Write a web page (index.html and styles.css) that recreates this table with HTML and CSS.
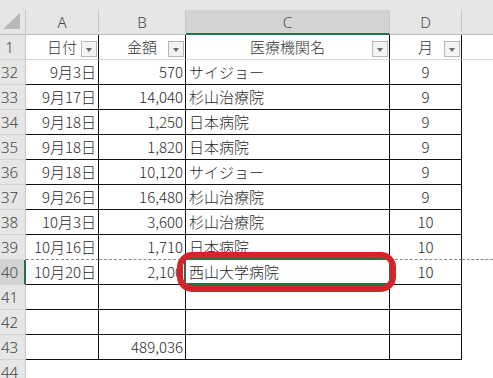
FILE: index.html
```html
<!DOCTYPE html>
<html lang="ja">
<head>
<meta charset="utf-8">
<title>Sheet</title>
<link rel="stylesheet" href="styles.css">
</head>
<body>
<div class="sheet">
  <div class="strip"></div>

  <div class="corner"><svg width="18" height="17" viewBox="0 0 18 17"><polygon points="17,0 17,16 0,16" fill="#b9b9b9"/></svg></div>
  <div class="colhead">A</div>
  <div class="colhead">B</div>
  <div class="colhead sel">C</div>
  <div class="colhead">D</div>
  <div class="colhead last"></div>

  <div class="rowhead">1</div>
  <div class="cell hdr">日付<span class="fbtn"></span></div>
  <div class="cell hdr">金額<span class="fbtn"></span></div>
  <div class="cell hdr">医療機関名<span class="fbtn"></span></div>
  <div class="cell hdr">月<span class="fbtn"></span></div>
  <div class="ecell hdr-e"></div>

  <div class="rowhead">32</div>
  <div class="cell r">9月3日</div><div class="cell r">570</div><div class="cell l">サイジョー</div><div class="cell c">9</div><div class="ecell"></div>

  <div class="rowhead">33</div>
  <div class="cell r">9月17日</div><div class="cell r">14,040</div><div class="cell l">杉山治療院</div><div class="cell c">9</div><div class="ecell"></div>

  <div class="rowhead">34</div>
  <div class="cell r">9月18日</div><div class="cell r">1,250</div><div class="cell l">日本病院</div><div class="cell c">9</div><div class="ecell"></div>

  <div class="rowhead">35</div>
  <div class="cell r">9月18日</div><div class="cell r">1,820</div><div class="cell l">日本病院</div><div class="cell c">9</div><div class="ecell"></div>

  <div class="rowhead">36</div>
  <div class="cell r">9月18日</div><div class="cell r">10,120</div><div class="cell l">サイジョー</div><div class="cell c">9</div><div class="ecell"></div>

  <div class="rowhead">37</div>
  <div class="cell r">9月26日</div><div class="cell r">16,480</div><div class="cell l">杉山治療院</div><div class="cell c">9</div><div class="ecell"></div>

  <div class="rowhead">38</div>
  <div class="cell r">10月3日</div><div class="cell r">3,600</div><div class="cell l">杉山治療院</div><div class="cell c">10</div><div class="ecell"></div>

  <div class="rowhead">39</div>
  <div class="cell r brk">10月16日</div><div class="cell r brk">1,710</div><div class="cell l brk">日本病院</div><div class="cell c brk">10</div><div class="ecell brk"></div>

  <div class="rowhead sel">40</div>
  <div class="cell r">10月20日</div><div class="cell r">2,100</div><div class="cell l active">西山大学病院<span class="mark"></span></div><div class="cell c">10</div><div class="ecell"></div>

  <div class="rowhead">41</div>
  <div class="cell"></div><div class="cell"></div><div class="cell"></div><div class="cell"></div><div class="ecell"></div>

  <div class="rowhead">42</div>
  <div class="cell"></div><div class="cell"></div><div class="cell"></div><div class="cell"></div><div class="ecell"></div>

  <div class="rowhead">43</div>
  <div class="cell"></div><div class="cell r">489,036</div><div class="cell"></div><div class="cell"></div><div class="ecell"></div>

  <div class="rowhead">44</div>
  <div class="ecell"></div><div class="ecell"></div><div class="ecell"></div><div class="ecell"></div><div class="ecell"></div>
</div>
</body>
</html>
```

FILE: styles.css
```css
* { box-sizing: border-box; }
html, body { margin: 0; padding: 0; background: #fff; overflow: hidden; }
body { width: 493px; height: 378px; }

.sheet {
  display: grid;
  grid-template-columns: 26px 73px 87px 204px 72px 1fr;
  grid-template-rows: 10px;
  grid-auto-rows: 25px;
  font-family: "Noto Sans CJK JP", "Noto Sans", sans-serif;
  font-size: 15px;
  font-weight: 300;
  color: #2a2a2a;
}

.strip {
  grid-column: 1 / -1;
  background: #e6e6e6;
}

.corner {
  background: #e6e6e6;
  border-right: 1px solid #c6c6c6;
  border-bottom: 1px solid #bdbdbd;
  display: flex;
  align-items: flex-end;
  justify-content: flex-end;
  padding: 0 4px 4px 0;
}
.corner svg { display: block; }

.colhead {
  background: #e6e6e6;
  border-right: 1px solid #c9c9c9;
  border-bottom: 1px solid #bdbdbd;
  text-align: center;
  line-height: 24px;
  color: #444;
  font-family: "Noto Sans", sans-serif;
}
.colhead.sel {
  background: #d3d3d3;
  border-bottom: 2px solid #217346;
  color: #3c5a46;
}
.colhead.last { border-right: none; }

.rowhead {
  background: #e6e6e6;
  border-right: 1px solid #c6c6c6;
  border-bottom: 1px solid #d2d2d2;
  text-align: center;
  padding-right: 6px;
  line-height: 24px;
  color: #444;
  font-family: "Noto Sans", sans-serif;
}
.rowhead.sel {
  background: #d3d3d3;
  border-right: 2px solid #217346;
  padding-right: 5px;
}

.cell {
  position: relative;
  background: #fff;
  border-right: 1px solid #111;
  border-bottom: 1px solid #111;
  padding: 0 3px;
  line-height: 24px;
  white-space: nowrap;
}
.cell.r { text-align: right; padding-right: 2px; }
.cell.l { text-align: left; padding-left: 3px; }
.cell.c { text-align: center; }

.cell.hdr {
  text-align: center;
  border-bottom: 1px solid #d4d4d4;
  color: #333;
}
.hdr-e { border-bottom: 1px solid #d4d4d4; }

.fbtn {
  position: absolute;
  right: 1px;
  bottom: 2px;
  width: 16px;
  height: 16px;
  background: #f3f3f3;
  border: 1px solid #b8b8b8;
}
.fbtn::after {
  content: "";
  position: absolute;
  left: 4px;
  top: 6px;
  border-left: 3.5px solid transparent;
  border-right: 3.5px solid transparent;
  border-top: 4px solid #6a6a6a;
}

.ecell { background: #fff; }

.brk { border-bottom: 1px dashed #8a8a8a; }

.active::before {
  content: "";
  position: absolute;
  z-index: 4;
  left: -2px;
  top: -2px;
  right: -2px;
  bottom: -1px;
  border: 2px solid #217346;
}

.mark {
  position: absolute;
  z-index: 5;
  left: -9px;
  top: -8px;
  width: 219px;
  height: 40px;
  border: 6px solid #d4232b;
  border-bottom-width: 7px;
  border-radius: 15px;
}
```
